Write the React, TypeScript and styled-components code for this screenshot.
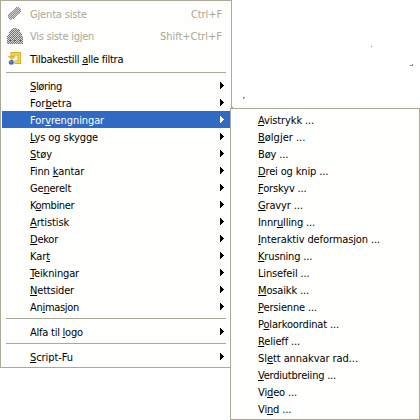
import React from 'react';
import styled, { createGlobalStyle } from 'styled-components';

const GlobalStyle = createGlobalStyle`
  body {
    margin: 0;
    background: #fff;
    overflow: hidden;
  }
`;

const Screen = styled.main`
  position: relative;
  width: 420px;
  height: 420px;
  overflow: hidden;
  background: #fff;
  font: 11px/17px 'DejaVu Sans Condensed', 'DejaVu Sans', sans-serif;
  color: #000;
  cursor: default;
`;

const Menu = styled.ul`
  box-sizing: border-box;
  margin: 0;
  padding: 2px 1px;
  list-style: none;
  background: #fefefc;
  border: 1px solid #aca899;
`;

const MainMenu = styled(Menu)`
  width: 232px;
  height: 368px;
`;

const SubMenu = styled(Menu)`
  position: absolute;
  left: 230px;
  top: 108px;
  width: 190px;
  height: 312px;
`;

const Item = styled.li<{ $tall?: boolean; $active?: boolean; $disabled?: boolean; $inset?: number }>`
  display: grid;
  grid-template-columns: ${p => p.$inset ?? 28}px 1fr auto;
  align-items: center;
  height: ${p => (p.$tall ? 22 : 17)}px;
  padding-right: ${p => (p.$tall ? 8 : 5)}px;
  white-space: pre;
  line-height: ${p => (p.$disabled ? 17 : 19)}px;
  color: ${p => (p.$active ? '#fff' : p.$disabled ? '#aca899' : '#000')};
  background: ${p => (p.$active ? '#316ac5' : 'transparent')};
`;

const Label = styled.span<{ $track?: number }>`
  grid-column: 2;
  height: 17px;
  letter-spacing: ${p => p.$track ?? -0.15}px;
`;

const Shortcut = styled(Label)`
  grid-column: 3;
`;

const Mnemonic = styled.u`
  text-decoration-thickness: 1px;
  text-underline-offset: 1px;
  text-decoration-skip-ink: none;
`;

const Separator = styled.li`
  height: 8px;
  padding: 3px 4px 0;
  box-sizing: border-box;

  &::before {
    content: '';
    display: block;
    height: 1px;
    background: #aca899;
  }
`;

const IconBox = styled.svg`
  width: 16px;
  height: 16px;
  margin-left: 5px;
  grid-column: 1;
`;

const ArrowIcon = styled.svg`
  width: 4px;
  height: 7px;
  grid-column: 3;
  margin-right: 1px;
  margin-bottom: 1px;
  fill: currentColor;
`;

const Speck = styled.i<{ $x: number; $y: number; $w?: number; $h?: number }>`
  position: absolute;
  left: ${p => p.$x}px;
  top: ${p => p.$y}px;
  width: ${p => p.$w ?? 1}px;
  height: ${p => p.$h ?? 1}px;
  background: #958978;
`;

/* An underscore marks the letter that follows it as the access key. */
function Caption({ text }: { text: string }) {
  const at = text.indexOf('_');
  if (at < 0) return <>{text}</>;
  return (
    <>
      {text.slice(0, at)}
      <Mnemonic>{text[at + 1]}</Mnemonic>
      {text.slice(at + 2)}
    </>
  );
}

const Arrow = () => (
  <ArrowIcon viewBox="0 0 4 7" shapeRendering="crispEdges">
    <path d="M0 0h1v1h1v1h1v1h1v1h-1v1h-1v1h-1v1h-1z" />
  </ArrowIcon>
);

/* Disabled icons are stippled: each row is [y, first column, end column]. */
type Run = [number, number, number];

const stipple = (runs: Run[], parity: number) =>
  runs
    .flatMap(([y, from, to]) =>
      Array.from({ length: to - from }, (_, i) => from + i)
        .filter(x => (x + y) % 2 === parity)
        .map(x => `M${x} ${y}h1v1h-1z`),
    )
    .join('');

const pill: Run[] = [
  [1, 9, 12], [2, 8, 13], [3, 7, 14], [4, 6, 14], [5, 5, 14], [6, 3, 13], [7, 2, 13],
  [8, 1, 11], [9, 1, 10], [10, 1, 9], [11, 1, 8], [12, 2, 7], [13, 3, 5],
];

const stack: Run[] = [
  [0, 6, 10], [1, 4, 12], [2, 3, 13], [3, 3, 13], [4, 2, 14], [5, 2, 14], [6, 1, 15], [7, 1, 15],
  [8, 0, 16], [9, 0, 16], [10, 0, 16], [11, 0, 16], [12, 0, 16], [13, 0, 16], [14, 0, 16], [15, 0, 16],
];

const RepeatIcon = () => (
  <IconBox viewBox="0 0 16 16" shapeRendering="crispEdges">
    <path fill="#8c8c8a" d={stipple(pill, 0)} />
    <path fill="#cfcfcd" d={stipple(pill, 1)} />
  </IconBox>
);

const ReshowIcon = () => (
  <IconBox viewBox="0 0 16 16" shapeRendering="crispEdges">
    <path fill="#747472" d={stipple(stack, 0)} />
    <path fill="#d6d6d4" d={stipple(stack, 1)} />
    <path fill="#5e5e5c" d="M3 9h1v1h-1zM6 8h1v1h-1zM9 9h1v1h-1zM12 8h1v1h-1zM2 12h2v1h-2zM7 12h2v1h-2zM12 12h2v1h-2z" />
  </IconBox>
);

const ResetIcon = () => (
  <IconBox viewBox="0 0 16 16">
    <path d="M7.5 12.3H12.3V3.7H5.3V7" fill="none" stroke="#c9a524" strokeWidth="3.6" />
    <path d="M8 12.3H12.3V3.7H5.3V7" fill="none" stroke="#f6d743" strokeWidth="2" />
    <path d="M1.3 6.4h7L4.8 9.6z" fill="#f2ca30" stroke="#c5a022" strokeWidth=".6" />
    <circle cx="4.3" cy="12.2" r="2.5" fill="#416fae" />
    <circle cx="3.6" cy="11.5" r=".9" fill="#83a8d8" />
  </IconBox>
);

const filters: [string, number][] = [
  ['_Sløring', -0.36],
  ['For_betra', 0],
  ['For_vrengningar', -0.1],
  ['_Lys og skygge', -0.08],
  ['_Støy', 0],
  ['Finn _kantar', -0.1],
  ['Ge_nerelt', -0.2],
  ['K_ombiner', -0.38],
  ['_Artistisk', -0.12],
  ['_Dekor', -0.24],
  ['Kar_t', -0.07],
  ['_Teikningar', -0.15],
  ['_Nettsider', -0.18],
  ['An_imasjon', -0.3],
];

const distortions: [string, number?][] = [
  ['_Avistrykk ...', -0.13],
  ['_Bølgjer ...', 0],
  ['Bøy ...'],
  ['_Drei og knip ...'],
  ['_Forskyv ...'],
  ['_Gravyr ...'],
  ['Innr_ulling ...'],
  ['_Interaktiv deformasjon ...', -0.11],
  ['_Krusning ...'],
  ['Linsefeil ...'],
  ['_Mosaikk ...'],
  ['_Persienne ...'],
  ['P_olarkoordinat ...'],
  ['_Relieff ...'],
  ['Sl_ett annakvar rad...', -0.07],
  ['_Verdiutbreiing ...', -0.22],
  ['Vi_deo ...'],
  ['Vi_nd ...'],
];

function FolderItem({ text, track, active }: { text: string; track: number; active?: boolean }) {
  return (
    <Item $active={active}>
      <Label $track={track}><Caption text={text} /></Label>
      <Arrow />
    </Item>
  );
}

export default function App() {
  return (
    <Screen>
      <GlobalStyle />
      <MainMenu>
        <Item $tall $disabled>
          <RepeatIcon />
          <Label $track={-0.16}>Gjenta siste</Label>
          <Shortcut $track={-0.1}>Ctrl+F</Shortcut>
        </Item>
        <Item $tall $disabled>
          <ReshowIcon />
          <Label $track={-0.26}>Vis siste igjen</Label>
          <Shortcut $track={-0.03}>Shift+Ctrl+F</Shortcut>
        </Item>
        <Item $tall>
          <ResetIcon />
          <Label $track={-0.25}><Caption text="Tilbakestill _alle filtra" /></Label>
        </Item>
        <Separator />
        {filters.map(([text, track], i) => (
          <FolderItem key={text} text={text} track={track} active={i === 2} />
        ))}
        <Separator />
        <FolderItem text="Alfa til _logo" track={-0.24} />
        <Separator />
        <FolderItem text="_Script-Fu" track={-0.07} />
      </MainMenu>
      <Speck $x={243} $y={97} $w={2} />
      <Speck $x={243} $y={98} />
      <Speck $x={232} $y={107} />
      <Speck $x={371} $y={46} />
      <Speck $x={410} $y={65} $w={3} />
      <Speck $x={412} $y={64} />
      <SubMenu>
        {distortions.map(([text, track]) => (
          <Item key={text} $inset={26}>
            <Label $track={track}><Caption text={text} /></Label>
          </Item>
        ))}
      </SubMenu>
    </Screen>
  );
}
